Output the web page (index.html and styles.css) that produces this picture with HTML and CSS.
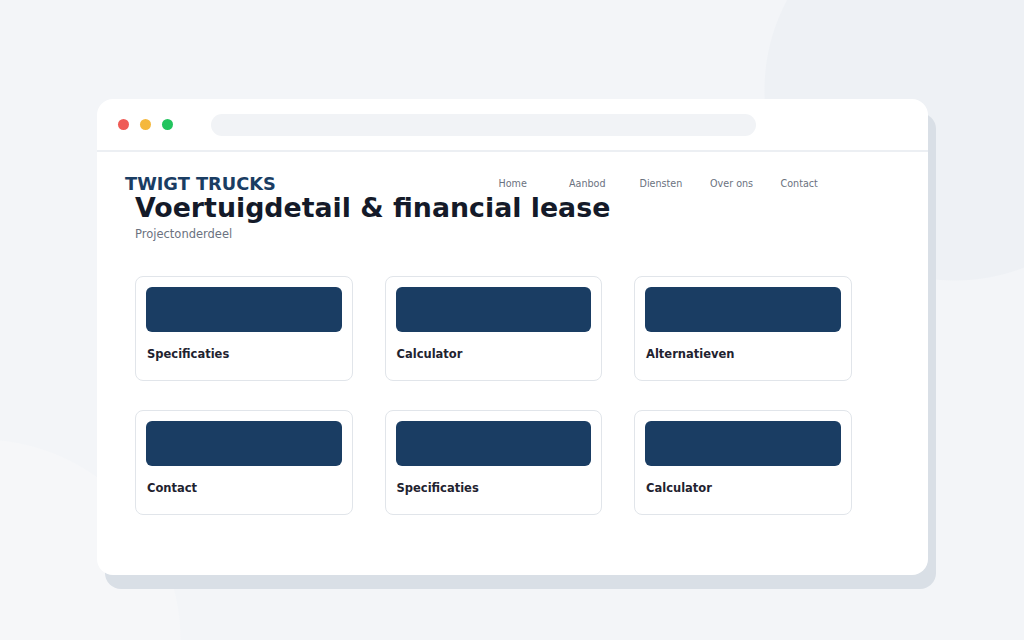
FILE: index.html
```html
<!DOCTYPE html>
<html lang="nl">
  <head>
    <meta charset="UTF-8" />
    <meta name="viewport" content="width=device-width, initial-scale=1.0" />
    <title>Twigt Trucks - Voertuigdetail &amp; financial lease</title>
    <link rel="stylesheet" href="styles.css">
  </head>
  <body>
    <div class="stage">
      <div class="browser">
        <div class="browser-bar">
          <div class="dots">
            <span class="dot red"></span>
            <span class="dot yellow"></span>
            <span class="dot green"></span>
          </div>
          <div class="address"></div>
        </div>

        <div class="site">
          <header class="site-header">
            <div class="logo">TWIGT TRUCKS</div>
            <nav class="nav">
              <a href="#">Home</a>
              <a href="#">Aanbod</a>
              <a href="#">Diensten</a>
              <a href="#">Over ons</a>
              <a href="#">Contact</a>
            </nav>
          </header>

          <main class="content">
            <h1>Voertuigdetail &amp; financial lease</h1>
            <p class="sub">Projectonderdeel</p>

            <div class="cards">
              <div class="card"><div class="card-media"></div><h3>Specificaties</h3></div>
              <div class="card"><div class="card-media"></div><h3>Calculator</h3></div>
              <div class="card"><div class="card-media"></div><h3>Alternatieven</h3></div>
              <div class="card"><div class="card-media"></div><h3>Contact</h3></div>
              <div class="card"><div class="card-media"></div><h3>Specificaties</h3></div>
              <div class="card"><div class="card-media"></div><h3>Calculator</h3></div>
            </div>
          </main>
        </div>
      </div>
    </div>
  </body>
</html>
```

FILE: styles.css
```css
html,
body {
  height: 100%;
}

/* page backdrop with two soft circles */
body {
  margin: 0;
  font-family: "DejaVu Sans", Verdana, sans-serif;
  background:
    radial-gradient(circle at 955px 90px, #eef1f5 190px, transparent 191px),
    radial-gradient(circle at -20px 640px, #f6f7f9 200px, transparent 201px),
    #f3f5f8;
  overflow: hidden;
}

.stage {
  padding: 99px 0 0 97px;
}

.browser {
  width: 831px;
  height: 476px;
  background: white;
  border-radius: 16px;
  box-shadow: 8px 14px 0 #d9dfe6;
  overflow: hidden;
}

.browser-bar {
  height: 51px;
  border-bottom: 2px solid #eceff3;
  display: flex;
  align-items: center;
  padding-left: 21px;
  gap: 38px;
}

.dots {
  display: flex;
  gap: 11px;
}

.dot {
  width: 11px;
  height: 11px;
  border-radius: 50%;
}

.red { background: #ef5b56; }
.yellow { background: #f5b83c; }
.green { background: #22c45e; }

.address {
  width: 545px;
  height: 22px;
  border-radius: 11px;
  background: #f1f3f6;
}

.site-header {
  display: flex;
  justify-content: space-between;
  align-items: center;
  width: 726px;
  padding: 21px 0 0 28px;
}

.logo {
  font-size: 17.8px;
  font-weight: bold;
  color: #1a3d63;
}

.nav {
  display: flex;
  margin-top: -1px;
}

.nav a {
  width: 70.5px;
  font-size: 9.6px;
  color: #6b7280;
  text-decoration: none;
}

.content {
  padding: 0 38px;
}

h1 {
  margin: -1px 0 0;
  font-size: 26.8px;
  font-weight: bold;
  color: #141a29;
  line-height: 30px;
}

.sub {
  margin: 4px 0 0;
  font-size: 11.5px;
  color: #6b7280;
}

.cards {
  margin-top: 35px;
  display: grid;
  grid-template-columns: repeat(3, 217.5px);
  column-gap: 32px;
  row-gap: 29px;
}

.card {
  height: 105px;
  box-sizing: border-box;
  border: 1px solid #e1e5ea;
  border-radius: 8px;
  padding: 10px 10px 0;
}

.card-media {
  height: 45px;
  border-radius: 6px;
  background: #1a3d63;
}

.card h3 {
  margin: 15px 0 0 1px;
  font-size: 11.5px;
  font-weight: bold;
  color: #1f2330;
}
```
